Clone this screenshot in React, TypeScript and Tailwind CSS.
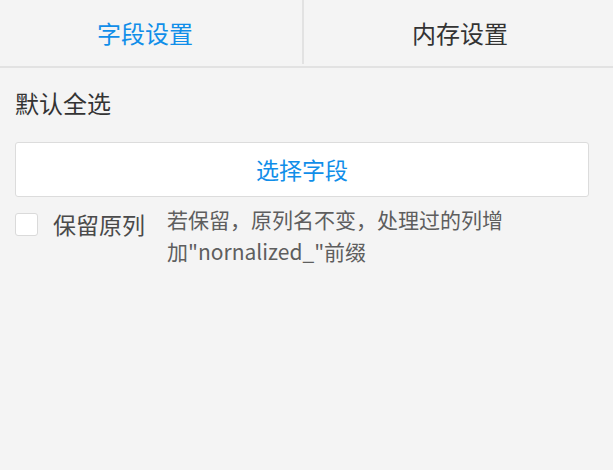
const font = { fontFamily: '"Noto Sans CJK SC", "Noto Sans", sans-serif' };

export default function App() {
  return (
    <div className="w-[613px] h-[470px] bg-[#f4f4f4] text-[#333]" style={font}>
      {/* Tabs */}
      <div className="flex h-[68px] border-b-2 border-[#e2e2e2]">
        <div className="w-[302px] flex items-center justify-center pr-3 text-[24px] text-[#108ee9]">
          字段设置
        </div>
        <div className="w-[2px] h-[64px] bg-[#e2e2e2]" />
        <div className="w-[300px] flex items-center justify-center pl-3 text-[24px] text-[#333]">
          内存设置
        </div>
      </div>

      <div className="w-[604px] px-[15px]">
        <div className="pt-[20px] text-[24px] leading-[30px]">默认全选</div>

        <button className="mt-[24px] w-full h-[55px] bg-white border border-[#dcdcdc] rounded-[3px] text-[23px] text-[#108ee9]">
          选择字段
        </button>

        <div className="mt-[16px] flex items-start">
          <div className="w-[23px] h-[23px] bg-white border border-[#dadada] rounded-[3px] shrink-0" />
          <div className="ml-[15px] text-[23px] leading-[23px] text-[#4a4a4a]">保留原列</div>
          <p className="ml-[22px] w-[340px] text-[21px] leading-[32px] -mt-[10px] text-[#5e5e5e]">
            若保留，原列名不变，处理过的列增加"nornalized_"前缀
          </p>
        </div>
      </div>
    </div>
  );
}
